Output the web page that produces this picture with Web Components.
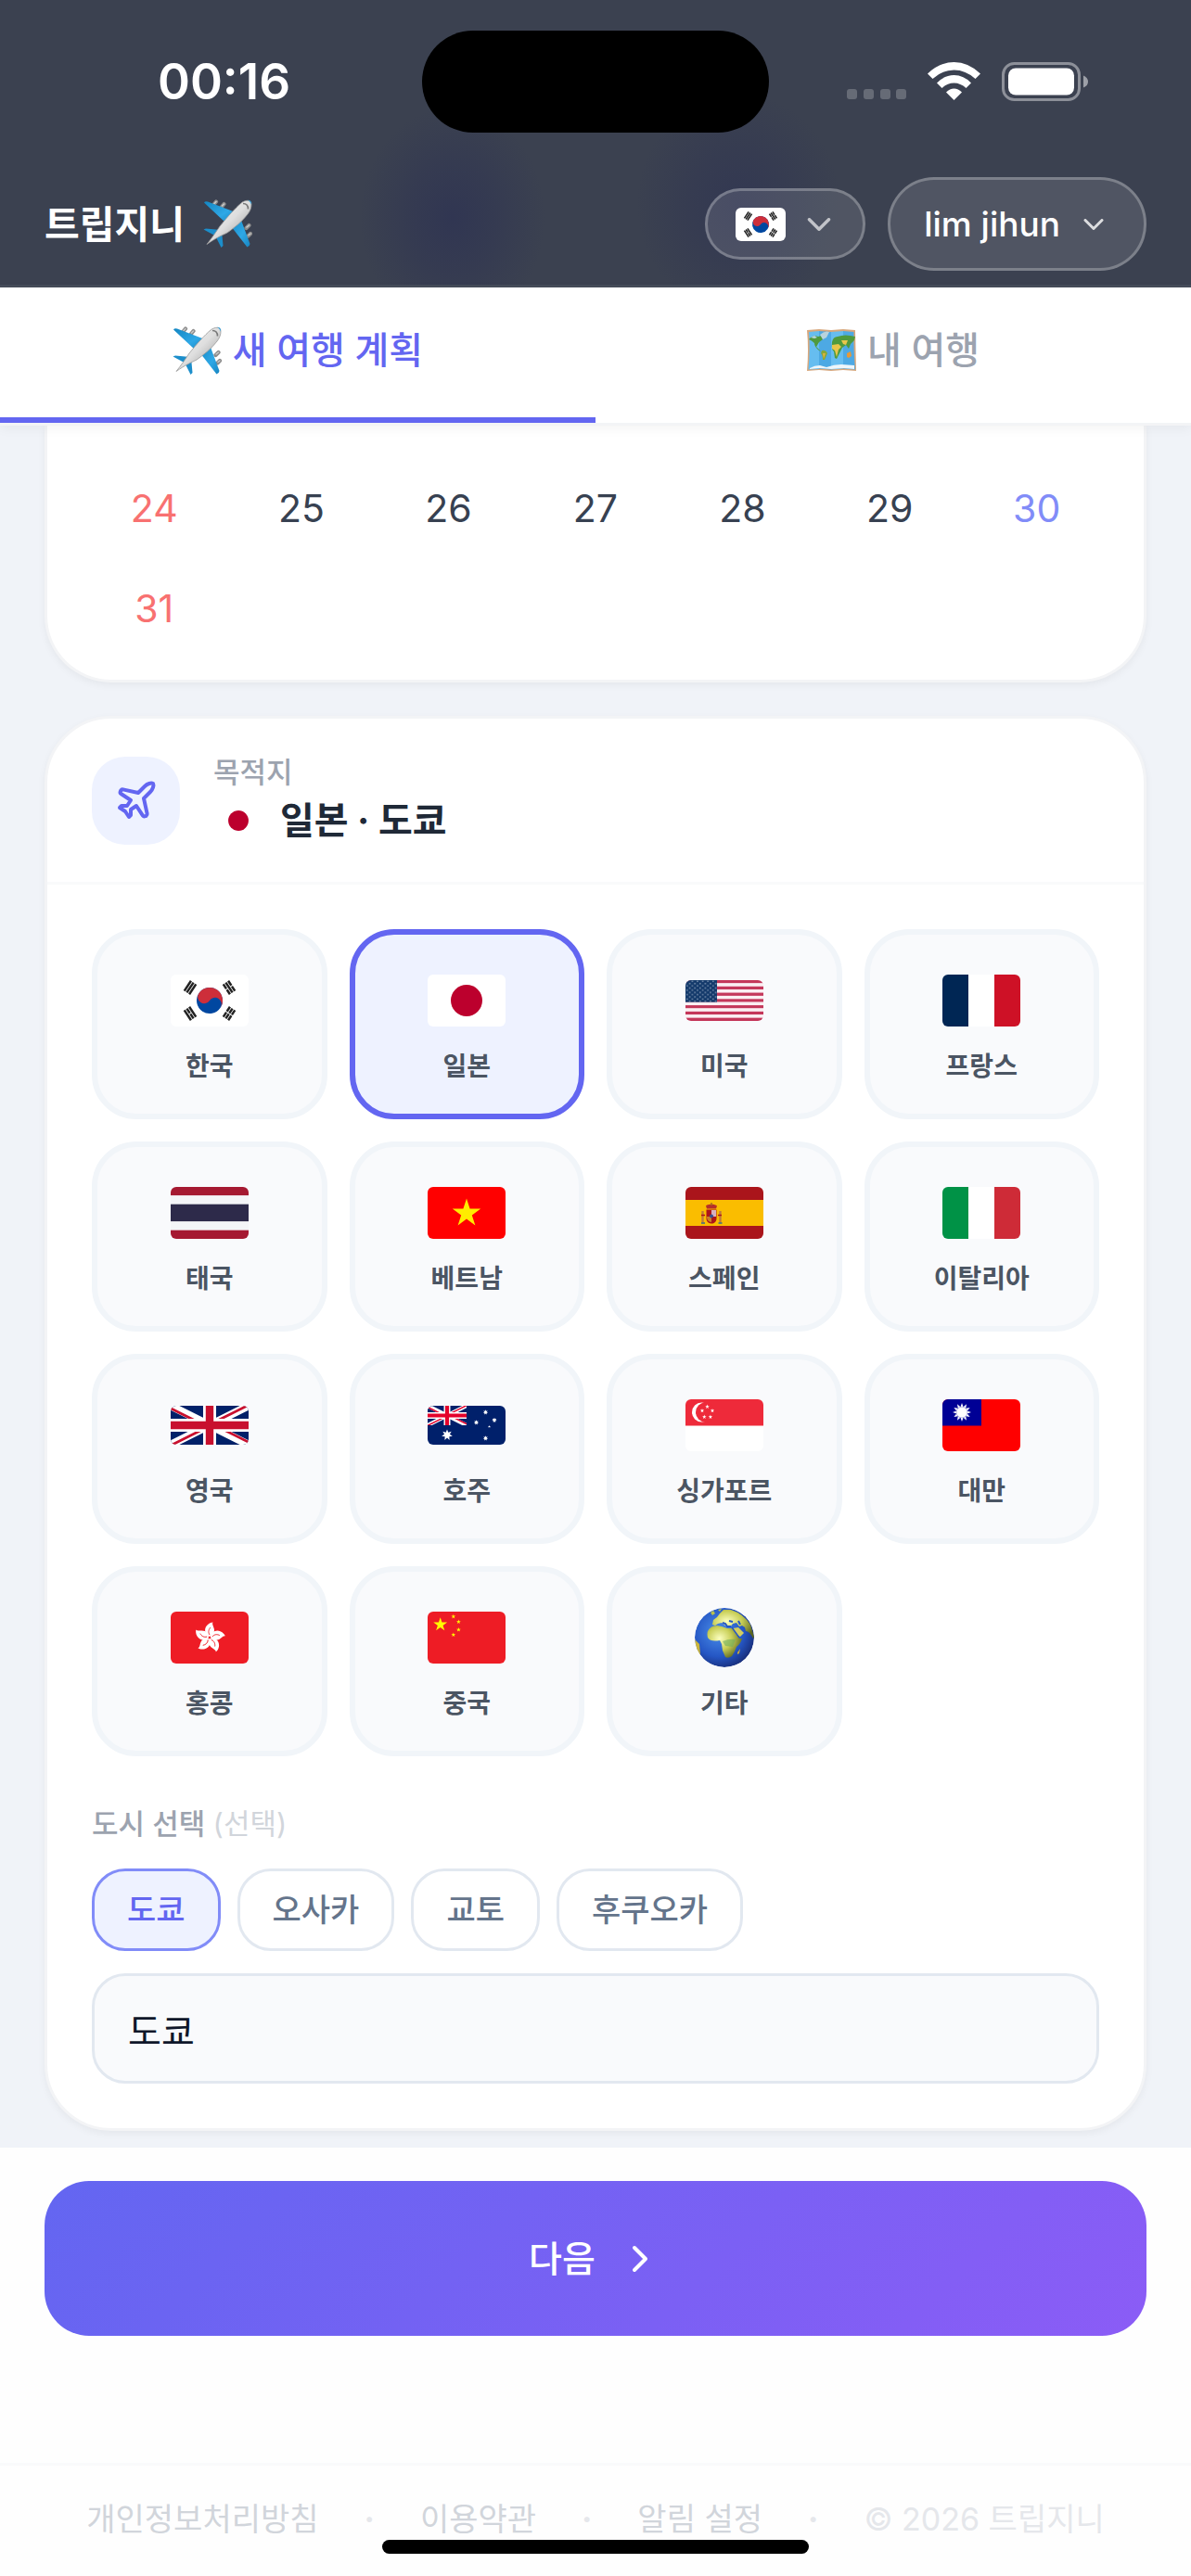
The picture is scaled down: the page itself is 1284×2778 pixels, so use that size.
<!DOCTYPE html>
<html lang="ko">
<head>
<meta charset="utf-8">
<meta name="viewport" content="width=device-width, initial-scale=1">
<title>트립지니</title>
<style>
    body {
        margin: 0;
        background-color: #f0f3f8;
        color: #1f2937;
        font-family: Inter, "Noto Sans CJK KR", sans-serif;
    }
</style>
</head>
<body>
<trip-app></trip-app>

<script>
const star = (cx, cy, r, fill, points = 5, inner = 0.382) => {
    const list = [];
    for (let i = 0; i < points * 2; i++) {
        const a = Math.PI * i / points - Math.PI / 2;
        const d = i % 2 ? r * inner : r;
        list.push(`${(cx + d * Math.cos(a)).toFixed(2)},${(cy + d * Math.sin(a)).toFixed(2)}`);
    }
    return `<polygon points="${list.join(" ")}" fill="${fill}"/>`;
};

const stripes = (colors, w, h) => colors.map((c, i) =>
    `<rect y="${h / colors.length * i}" width="${w}" height="${h / colors.length}" fill="${c}"/>`).join("");

const bands = (colors) => colors.map((c, i) =>
    `<rect x="${28 * i}" width="28" height="56" fill="${c}"/>`).join("");

// three bars, 1 = solid, 0 = broken
const trigram = (x, y, angle, bars) => `<g transform="translate(${x} ${y}) rotate(${angle})" stroke="#222" stroke-width="2.5">${
    bars.map((solid, i) => {
        const bx = (i - 1) * 3.2;
        return solid ? `<path d="M${bx} -6.5V6.5"/>` : `<path d="M${bx} -6.5V-.5M${bx} .5V6.5"/>`;
    }).join("")}</g>`;

const unionJack = (blue, red) => `
    <rect width="84" height="42" fill="${blue}"/>
    <path d="M0 0 84 42M84 0 0 42" stroke="#fff" stroke-width="8.4"/>
    <path d="M-2 1.8 40 22.8M44 19.2 86 -1.8M44 19.2 86 40.2M40 22.8 -2 43.8" stroke="${red}" stroke-width="2.8"/>
    <path d="M42 0V42M0 21H84" stroke="#fff" stroke-width="14"/>
    <path d="M42 0V42M0 21H84" stroke="${red}" stroke-width="8.4"/>`;

const petal = (angle) => `<g transform="translate(42 28) rotate(${angle})">
    <path d="M0-1C-5-3-6.5-9-3-13-1-15.5 2-16.5 3.5-16.5 2-14 5.5-11 5-7 4.5-4 2-2 0-1Z" fill="#fff"/>
    <path d="M0-3C-2-6-1-9 1-11" stroke="#ee1c25" stroke-width=".9" fill="none"/></g>`;

const FLAGS = {
    kr: [56, `<rect width="84" height="56" fill="#fff"/>
        <g transform="translate(42 28) rotate(33.7)">
            <circle r="14" fill="#0047a0"/>
            <path d="M-14 0A14 14 0 0 1 14 0A7 7 0 0 0 0 0A7 7 0 0 1-14 0Z" fill="#cd2e3a"/>
        </g>
        ${trigram(21, 14, 33.7, [1, 1, 1])}${trigram(63, 14, -33.7, [0, 1, 0])}
        ${trigram(21, 42, -33.7, [1, 0, 1])}${trigram(63, 42, 33.7, [0, 0, 0])}`],
    jp: [56, `<rect width="84" height="56" fill="#fff"/><circle cx="42" cy="28" r="17" fill="#bc002d"/>`],
    us: [44, stripes(Array.from({ length: 13 }, (_, i) => i % 2 ? "#fbeff2" : "#c4375a"), 84, 44) + `
        <pattern id="s" width="5.6" height="4.8" patternUnits="userSpaceOnUse">
            <circle cx="1.8" cy="1.3" r=".8" fill="#8fa3bd"/><circle cx="4.6" cy="3.7" r=".8" fill="#8fa3bd"/>
        </pattern>
        <rect width="34" height="23.7" fill="#143a6b"/><rect width="34" height="23.7" fill="url(#s)"/>`],
    fr: [56, bands(["#002654", "#fff", "#ce1126"])],
    th: [56, stripes(["#a51931", "#f4f5f8", "#2d2a4a", "#2d2a4a", "#f4f5f8", "#a51931"], 84, 56)],
    vn: [56, `<rect width="84" height="56" fill="#f00"/>${star(42, 28.5, 16, "#ffec00")}`],
    es: [56, `<rect width="84" height="56" fill="#aa151b"/><rect y="14" width="84" height="28" fill="#fabd00"/>
        <path d="M18.5 26v12.5M37.5 26v12.5" stroke="#c07b3a" stroke-width="2.4"/>
        <path d="M17 39h4M35.5 39h4" stroke="#3a6a8c" stroke-width="1.6"/>
        <path d="M17 30.5h4M35 30.5h4" stroke="#ad1519" stroke-width="1.6"/>
        <path d="M22.5 24.5h11V34c0 3.5-2.5 5.5-5.5 5.5S22.5 37.5 22.5 34Z" fill="#ad1519"/>
        <path d="M28 25h5v7h-5Z" fill="#d8b0c0"/><path d="M23 32h5v6c-3-.5-5-2-5-6Z" fill="#c8802a"/>
        <circle cx="28" cy="31.5" r="2" fill="#39508f"/>
        <path d="M23 23.5l-1-3c2-2.5 10-2.5 12 0l-1 3Z" fill="#b5302a"/><path d="M28 17v3" stroke="#a06a20" stroke-width="1.5"/>`],
    it: [56, bands(["#009246", "#fff", "#ce2b37"])],
    gb: [42, unionJack("#012169", "#c8102e")],
    au: [42, `<rect width="84" height="42" fill="#00206b"/>
        <clipPath id="u"><rect width="84" height="42"/></clipPath>
        <g transform="scale(.5)" clip-path="url(#u)">${unionJack("#00206b", "#e4002b")}</g>
        ${star(21, 31.5, 6, "#fff", 7, 0.5)}${star(62.5, 7, 2.8, "#fff", 7, 0.5)}${star(52.5, 18, 2.8, "#fff", 7, 0.5)}
        ${star(72, 15.5, 2.8, "#fff", 7, 0.5)}${star(66.5, 22.5, 1.6, "#fff")}${star(62.5, 35, 2.8, "#fff", 7, 0.5)}`],
    sg: [56, `<rect width="84" height="56" fill="#fff"/><rect width="84" height="28.5" fill="#ee2a3a"/>
        <circle cx="17.5" cy="14" r="10.5" fill="#fff"/><circle cx="21.5" cy="14" r="10.5" fill="#ee2a3a"/>
        ${star(23.5, 8, 2.4, "#fff")}${star(18, 12.3, 2.4, "#fff")}${star(29, 12.3, 2.4, "#fff")}${star(20.3, 19, 2.4, "#fff")}${star(26.9, 19, 2.4, "#fff")}`],
    tw: [56, `<rect width="84" height="56" fill="#f00"/><rect width="42" height="28.5" fill="#000095"/>
        ${star(21, 14, 10, "#fff", 12, 0.6)}<circle cx="21" cy="14" r="6.3" fill="#000095" opacity=".35"/><circle cx="21" cy="14" r="5.6" fill="#fff"/>`],
    hk: [56, `<rect width="84" height="56" fill="#ee1c25"/>${[0, 72, 144, 216, 288].map(petal).join("")}`],
    cn: [56, `<rect width="84" height="56" fill="#ee1c25"/>${star(13.7, 14, 7.8, "#ff0")}
        ${star(27.8, 5.3, 2.6, "#ff0")}${star(33.4, 11, 2.6, "#ff0")}${star(33.4, 19.5, 2.6, "#ff0")}${star(27.8, 25, 2.6, "#ff0")}`],
};

const ICONS = {
    plane: ["0 0 24 24", `<path d="M17.8 19.2 16 11l3.5-3.5C21 6 21.5 4 21 3c-1-.5-3 0-4.5 1.5L13 8 4.8 6.2c-.5-.1-.9.1-1.1.5l-.3.5c-.2.5-.1 1 .3 1.3L9 12l-2 3H4l-1 1 3 2 2 3 1-1v-3l3-2 3.5 5.3c.3.4.8.5 1.3.3l.5-.2c.4-.3.6-.7.5-1.2z"/>`],
    down: ["0 0 24 24", `<path d="m6 9 6 6 6-6"/>`],
    right: ["0 0 24 24", `<path d="m9 18 6-6-6-6"/>`],
};

const EMOJI = {
    airplane: `<defs>
            <linearGradient id="b" x1="0" y1="0" x2="1" y2="1"><stop offset="0" stop-color="#f8f8f8"/><stop offset=".5" stop-color="#dedede"/><stop offset="1" stop-color="#8d8d8d"/></linearGradient>
            <linearGradient id="w" x1="0" y1="0" x2="1" y2="1"><stop offset="0" stop-color="#1386c2"/><stop offset=".6" stop-color="#2fa8e6"/><stop offset="1" stop-color="#1684c0"/></linearGradient>
        </defs>
        <g stroke="#8b8b8b" stroke-width="4.2" stroke-linecap="round">
            <path d="M11.5 5.5 14 2.5M20 8 22.5 5M46.5 31 49.5 28M48.5 39.5 51 37"/>
        </g>
        <g stroke="#c9c9c9" stroke-width="1.5" stroke-linecap="round">
            <path d="M12 4.5 14 2.5M20.5 7 22.5 5M47 30 49.5 28M49 38.5 51 37"/>
        </g>
        <path d="M1 3.5Q2 1.8 5 2.5L35 14 24 25Z" fill="url(#w)"/>
        <path d="M50.5 48Q50 51 47.5 51.5L30 29 39 17Z" fill="url(#w)"/>
        <path d="M.5 32.5 3 31.5 19 33 13.5 39.5Z" fill="#1c8ecb"/>
        <path d="M19.5 52 21.5 50 20 33.5 13 39Z" fill="#1c8ecb"/>
        <path d="M4 48.5C10 41 14 35 18 29 26 19 35 9 41 4c4-3.500 11-4 11 1 0 4-1 7-4 11-6 8-15 15-22 20-6 3-13 6-22 12.500Z" fill="url(#b)" stroke="#9a9a9a" stroke-width=".8"/>
        <path d="M43 4.5c4 0 5.5 2 5.5 6" stroke="#777" stroke-width="1.6" fill="none"/>
        <path d="M48 .8c3 0 4.5 1.7 4 5-1-2.5-2-4-4-5Z" fill="#2e9fdc"/>`,
    map: `<path d="M0 4 13 3 26 4 39 3 52 4 53 48 39 47 26 48 13 47 0 48Q2 25 0 4Z" fill="#d8a77c"/>
        <path d="M2 6 13 5V46L1.5 46.5Q3.5 25 2 6Z" fill="#66bdf0"/>
        <path d="M13 5 26 6V46.5L13 45.5Z" fill="#4da9e4"/>
        <path d="M26 6 39 5V45.5L26 46.5Z" fill="#66bdf0"/>
        <path d="M39 5 50.5 6Q50 25 52 46.5L39 45.5Z" fill="#4da9e4"/>
        <path d="M4 12q4-3 8-1l4-1 1 4-4 3-3 5q4 4 5 5l-2-1q-5-4-5-8-3-3-6-4Z" fill="#4f9a3e"/>
        <path d="M14 9q5-5 10-3l-3 6-4 2ZM4 12l4-2 3 2-3 1Z" fill="#b8d3dd"/>
        <path d="M16 26q4-1 6 3l-3 7-2 0q0-5-2-7Z" fill="#86a83a"/>
        <path d="M17 29l3 0-2 6Z" fill="#e3b23b"/>
        <path d="M27 17q1-6 6-6 8-3 19 0l-1 4-4 4-2 5-3-4-4 3-3 6-3 6-2-1-1-7q-3-2-2-10Z" fill="#4f9a3e"/>
        <path d="M27 20l7-1 3 3-3 3-2 8-2-7-3-2ZM37 15l7 0-2 5-3-1Z" fill="#e9c64a"/>
        <path d="M43 29l4-2 1 5-3 2-2-1Z" fill="#e6993a"/>
        <path d="M3 45q5-3 11-3l7 2q8-3 16-3l14 1v4l-12-1-13 1-13-1-10 1Z" fill="#eef6fb"/>`,
    globe: `<defs>
            <radialGradient id="g" cx=".4" cy=".4" r=".65"><stop offset="0" stop-color="#4a8fea"/><stop offset=".65" stop-color="#2556c4"/><stop offset="1" stop-color="#182c78"/></radialGradient>
            <radialGradient id="l" cx=".35" cy=".4" r=".7"><stop offset="0" stop-color="#fbffc0"/><stop offset=".5" stop-color="#c9cf57"/><stop offset="1" stop-color="#5a6420"/></radialGradient>
            <clipPath id="c"><circle cx="32" cy="32" r="32"/></clipPath>
        </defs>
        <g clip-path="url(#c)">
            <circle cx="32" cy="32" r="32" fill="url(#g)"/>
            <path d="M19 18l1-5 4-3 3-4 4-4 8 0q13 4 21 16l4 13-1 2q-4-8-8-8l-1-4-3-2-3 1-3-4-4 1-3 4-4-1-5-4-4 1-3 2Z" fill="url(#l)"/>
            <path d="M17 5l3-2 2 3-3 2ZM25 2l4-1-2 3Z" fill="#b9c24e"/>
            <path d="M14 25q3-6 10-6l5 1 6 2 6 0 3 5 4 6 3 0q-1 5-6 9l-2 5-3 5q-4 3-7 1l-3-7-1-7-2-4q-10 2-13-3-1-4 0-7Z" fill="url(#l)"/>
            <path d="M30 36q7-3 14-2l-3 8-8-1Z" fill="#6fae5b" opacity=".6"/>
            <path d="M41 22l6-1 6 6-4 4-4-2Z" fill="#d3cd60"/>
            <path d="M40 21l8 11" stroke="#2556c4" stroke-width="1.4"/>
            <path d="M30 16l3 1 2 3 4 0M37 14l4 1M47 14l2 4" stroke="#2556c4" stroke-width="2" fill="none"/>
            <path d="M46 48l3-4-1 5-2 1Z" fill="#c7a93c"/>
            <path d="M0 34l5 5 1 11-4 0Z" fill="#c9b43c"/>
        </g>`,
};

const COUNTRIES = [
    ["kr", "한국"], ["jp", "일본"], ["us", "미국"], ["fr", "프랑스"],
    ["th", "태국"], ["vn", "베트남"], ["es", "스페인"], ["it", "이탈리아"],
    ["gb", "영국"], ["au", "호주"], ["sg", "싱가포르"], ["tw", "대만"],
    ["hk", "홍콩"], ["cn", "중국"], ["etc", "기타"],
];

class FlagIcon extends HTMLElement {
    connectedCallback() {
        const [height, body] = FLAGS[this.getAttribute("code")];
        this.attachShadow({ mode: "open" }).innerHTML = `<style>
            :host { display: block; width: 84px; }
            svg { display: block; width: 100%; border-radius: 6px; }
        </style>
        <svg viewBox="0 0 84 ${height}" aria-hidden="true">${body}</svg>`;
    }
}

class LineIcon extends HTMLElement {
    connectedCallback() {
        const [box, body] = ICONS[this.getAttribute("name")];
        this.attachShadow({ mode: "open" }).innerHTML = `<style>
            :host { display: block; width: 48px; flex: none; }
            svg { display: block; width: 100%; }
        </style>
        <svg viewBox="${box}" fill="none" stroke="currentColor" stroke-width="2" stroke-linecap="round" stroke-linejoin="round" aria-hidden="true">${body}</svg>`;
    }
}

class EmojiIcon extends HTMLElement {
    connectedCallback() {
        const name = this.getAttribute("name");
        const size = name === "globe" ? 64 : 53;
        this.attachShadow({ mode: "open" }).innerHTML = `<style>
            :host { display: block; width: ${size}px; flex: none; }
            svg { display: block; width: 100%; }
        </style>
        <svg viewBox="0 0 ${size} ${size}" aria-hidden="true">${EMOJI[name]}</svg>`;
    }
}

class StatusBar extends HTMLElement {
    connectedCallback() {
        this.attachShadow({ mode: "open" }).innerHTML = `<style>
            :host {
                display: grid;
                grid-template-columns: 1fr 374px 1fr;
                align-items: center;
                padding-top: 33px;
                color: #fff;
            }
            time {
                padding-left: 28px;
                text-align: center;
                font-size: 53px;
                font-weight: 600;
                line-height: 64px;
            }
            .island { height: 110px; border-radius: 55px; background-color: #000; }
            .icons {
                display: flex;
                justify-content: center;
                padding-right: 28px;
            }
            svg { display: block; width: 260px; height: 42px; }
        </style>
        <time>00:16</time>
        <div class="island"></div>
        <div class="icons">
            <svg viewBox="0 0 260 42" fill="#fff" aria-hidden="true">
                <g opacity=".22">
                    <rect y="29" width="11" height="11" rx="3"/><rect x="18" y="29" width="11" height="11" rx="3"/>
                    <rect x="36" y="29" width="11" height="11" rx="3"/><rect x="53" y="29" width="11" height="11" rx="3"/>
                </g>
                <path d="M87 12.5Q100 0 115.5 0T144 12.5L138.5 18Q128 8.5 115.5 8.5T92.5 18Z"/>
                <path d="M97 22.5Q105 14 115.5 14T134 22.5L128.5 28Q122.5 22.5 115.5 22.5T102.5 28Z"/>
                <path d="M107 32.5Q111 28.5 115.5 28.5T124 32.5L115.5 41Z"/>
                <rect x="168.5" y="1.5" width="82" height="39" rx="12" fill="none" stroke="#fff" stroke-width="3" opacity=".42"/>
                <rect x="174" y="6.5" width="71" height="29" rx="8"/>
                <path d="M255 14.5q5 2 5 6.5t-5 6.5Z" opacity=".5"/>
            </svg>
        </div>`;
    }
}

class AppHeader extends HTMLElement {
    connectedCallback() {
        this.attachShadow({ mode: "open" }).innerHTML = `<style>
            :host {
                display: block;
                border-bottom: 3px solid #454c5a;
                background:
                    radial-gradient(ellipse 100px 120px at 38% 235px, #2c3153b0, #2c315360 50%, #2c315300),
                    radial-gradient(ellipse 110px 120px at 62% 220px, #2c315390, #2c315350 50%, #2c315300),
                    #3b4150;
                color: #fff;
            }
            .row {
                display: flex;
                align-items: center;
                gap: 24px;
                padding: 48px 48px 15px;
            }
            .brand {
                display: flex;
                align-items: center;
                gap: 20px;
                margin-right: auto;
                color: inherit;
                text-decoration: none;
                font-size: 41px;
                font-weight: 700;
                line-height: 48px;
            }
            button {
                display: flex;
                align-items: center;
                box-sizing: border-box;
                border: 3px solid #ffffff40;
                background-color: #ffffff1c;
                color: inherit;
                font: inherit;
            }
            .lang {
                gap: 15px;
                height: 77px;
                padding: 0 26px 0 30px;
                border-radius: 38px;
            }
            .user {
                gap: 18px;
                height: 101px;
                padding: 0 36px;
                border-radius: 50px;
                font-size: 37px;
                font-weight: 500;
            }
            flag-icon { width: 54px; }
            line-icon { opacity: .65; }
            .lang line-icon { width: 42px; }
            .user line-icon { width: 36px; opacity: .8; }
        </style>
        <status-bar></status-bar>
        <div class="row">
            <a class="brand" href="#">트립지니 <emoji-icon name="airplane"></emoji-icon></a>
            <button class="lang" type="button" aria-label="한국어" aria-haspopup="menu">
                <flag-icon code="kr"></flag-icon><line-icon name="down"></line-icon>
            </button>
            <button class="user" type="button" aria-haspopup="menu">lim jihun<line-icon name="down"></line-icon></button>
        </div>`;
    }
}

class TripTab extends HTMLElement {
    connectedCallback() {
        const selected = this.hasAttribute("selected");
        this.attachShadow({ mode: "open" }).innerHTML = `<style>
            :host { display: block; flex: 1; }
            button {
                display: flex;
                align-items: center;
                justify-content: center;
                gap: 12px;
                box-sizing: border-box;
                width: 100%;
                height: 146px;
                padding: 0 0 4px;
                border: 0;
                border-bottom: 6px solid transparent;
                background: none;
                color: #9ca3af;
                font: 500 40px/48px Inter, "Noto Sans CJK KR", sans-serif;
            }
            :host([selected]) button {
                border-color: #6366f1;
                color: #6366f1;
            }
        </style>
        <button type="button" role="tab" aria-selected="${selected}">
            <emoji-icon name="${this.getAttribute("icon")}"></emoji-icon><slot></slot>
        </button>`;
    }
}

class TripTabs extends HTMLElement {
    connectedCallback() {
        this.attachShadow({ mode: "open" }).innerHTML = `<style>
            :host {
                display: flex;
                position: relative;
                border-bottom: 3px solid #f3f4f6;
                background-color: #fff;
                box-shadow: 0 3px 12px #0000000d;
            }
        </style>
        <slot></slot>`;
        this.setAttribute("role", "tablist");
    }
}

class TripCard extends HTMLElement {
    connectedCallback() {
        this.attachShadow({ mode: "open" }).innerHTML = `<style>
            :host {
                display: block;
                margin: 0 48px;
                border: 3px solid #f3f4f6;
                border-radius: 72px;
                background-color: #fff;
                box-shadow: 0 3px 9px #0000000d;
            }
            :host([scrolled]) {
                border-top: 0;
                border-radius: 0 0 72px 72px;
            }
        </style>
        <slot></slot>`;
    }
}

class CalendarWeeks extends HTMLElement {
    connectedCallback() {
        const weeks = [[24, 25, 26, 27, 28, 29, 30], [31, "", "", "", "", "", ""]];
        this.attachShadow({ mode: "open" }).innerHTML = `<style>
            :host { display: block; padding: 35px 36px 23px; }
            table { width: 100%; border-collapse: collapse; table-layout: fixed; }
            td {
                height: 108px;
                padding: 0;
                color: #374151;
                font-size: 41px;
                text-align: center;
            }
            td:first-child { color: #f87171; }
            td:last-child { color: #818cf8; }
        </style>
        <table aria-label="날짜">${weeks.map((week) =>
            `<tr>${week.map((day) => `<td>${day}</td>`).join("")}</tr>`).join("")}
        </table>`;
    }
}

class DestinationHead extends HTMLElement {
    connectedCallback() {
        this.attachShadow({ mode: "open" }).innerHTML = `<style>
            :host {
                display: flex;
                align-items: center;
                gap: 36px;
                padding: 34px 48px;
                border-bottom: 3px solid #f9fafb;
            }
            .badge {
                display: grid;
                place-items: center;
                width: 95px;
                height: 95px;
                border-radius: 36px;
                background-color: #eef2ff;
                color: #6366f1;
            }
            .text { padding-bottom: 4px; }
            p {
                margin: 0;
                color: #9ca3af;
                font-size: 31px;
                font-weight: 500;
                line-height: 48px;
            }
            h2 {
                display: flex;
                align-items: center;
                gap: 18px;
                margin: 0;
                font-size: 40px;
                font-weight: 700;
                line-height: 56px;
            }
            flag-icon { width: 54px; }
        </style>
        <div class="badge"><line-icon name="plane"></line-icon></div>
        <div class="text">
            <p>목적지</p>
            <h2><flag-icon code="jp"></flag-icon><slot></slot></h2>
        </div>`;
    }
}

class CountryTile extends HTMLElement {
    connectedCallback() {
        const code = this.getAttribute("code");
        const picture = FLAGS[code] ? `<flag-icon code="${code}"></flag-icon>` : `<emoji-icon name="globe"></emoji-icon>`;
        this.attachShadow({ mode: "open" }).innerHTML = `<style>
            :host { display: block; }
            button {
                display: flex;
                flex-direction: column;
                align-items: center;
                gap: 18px;
                box-sizing: border-box;
                width: 100%;
                height: 205px;
                padding: 36px 0 0;
                border: 6px solid #f1f5f9;
                border-radius: 48px;
                background-color: #f9fafc;
                color: #4b5563;
                font: 600 28px/36px Inter, "Noto Sans CJK KR", sans-serif;
            }
            :host([selected]) button {
                border-color: #6366f1;
                background-color: #eef2ff;
            }
            .picture { display: grid; place-items: center; height: 70px; }
        </style>
        <button type="button" aria-pressed="${this.hasAttribute("selected")}">
            <span class="picture">${picture}</span><slot></slot>
        </button>`;
    }
}

class CountryGrid extends HTMLElement {
    connectedCallback() {
        this.attachShadow({ mode: "open" }).innerHTML = `<style>
            :host {
                display: grid;
                grid-template-columns: repeat(4, 1fr);
                gap: 24px;
            }
        </style>
        ${COUNTRIES.map(([code, name]) =>
            `<country-tile code="${code}"${code === "jp" ? " selected" : ""}>${name}</country-tile>`).join("")}`;
    }
}

class CityChip extends HTMLElement {
    connectedCallback() {
        this.attachShadow({ mode: "open" }).innerHTML = `<style>
            :host { display: block; }
            button {
                box-sizing: border-box;
                height: 89px;
                padding: 0 35px;
                border: 3px solid #e2e8f0;
                border-radius: 36px;
                background-color: #fff;
                color: #64748b;
                font: 500 34px/48px Inter, "Noto Sans CJK KR", sans-serif;
            }
            :host([selected]) button {
                border-color: #818cf8;
                background-color: #eef2ff;
                color: #6366f1;
            }
        </style>
        <button type="button" aria-pressed="${this.hasAttribute("selected")}"><slot></slot></button>`;
    }
}

class CityPicker extends HTMLElement {
    connectedCallback() {
        this.attachShadow({ mode: "open" }).innerHTML = `<style>
            :host { display: block; padding-top: 49px; }
            label {
                display: block;
                color: #9ca3af;
                font-size: 31px;
                font-weight: 500;
                line-height: 48px;
            }
            label span { color: #d1d5db; font-weight: 400; }
            .chips { display: flex; flex-wrap: wrap; gap: 18px; padding: 24px 0; }
            input {
                display: block;
                box-sizing: border-box;
                width: 100%;
                height: 119px;
                padding: 0 36px;
                border: 3px solid #e2e8f0;
                border-radius: 36px;
                background-color: #f9fafc;
                color: #0f172a;
                font: 400 39px/48px Inter, "Noto Sans CJK KR", sans-serif;
            }
        </style>
        <label for="city">도시 선택 <span>(선택)</span></label>
        <div class="chips">
            <city-chip selected>도쿄</city-chip>
            <city-chip>오사카</city-chip>
            <city-chip>교토</city-chip>
            <city-chip>후쿠오카</city-chip>
        </div>
        <input id="city" type="text" value="도쿄">`;
    }
}

class ActionBar extends HTMLElement {
    connectedCallback() {
        this.attachShadow({ mode: "open" }).innerHTML = `<style>
            :host {
                display: block;
                margin-top: 18px;
                padding: 36px 48px 137px;
                background-color: #fefefe;
            }
            button {
                display: flex;
                align-items: center;
                justify-content: center;
                gap: 24px;
                width: 100%;
                height: 167px;
                border: 0;
                border-radius: 48px;
                background: linear-gradient(135deg, #6366f1, #8b5cf6);
                color: #fff;
                font: 500 39px/48px Inter, "Noto Sans CJK KR", sans-serif;
            }
        </style>
        <button type="button"><slot></slot><line-icon name="right"></line-icon></button>`;
    }
}

class SiteFooter extends HTMLElement {
    connectedCallback() {
        this.attachShadow({ mode: "open" }).innerHTML = `<style>
            :host {
                display: block;
                position: relative;
                flex: 1;
                border-top: 3px solid #f9fafb;
                background-color: #fefefe;
                color: #e5e7eb;
                font-size: 34px;
                line-height: 48px;
            }
            nav {
                display: flex;
                justify-content: center;
                gap: 49px;
                padding: 34px 0 37px;
            }
            a { color: #d1d5db; text-decoration: none; }
            .dot { font-weight: 700; }
            .home {
                position: absolute;
                bottom: 24px;
                left: 50%;
                width: 460px;
                height: 15px;
                margin-left: -230px;
                border-radius: 8px;
                background-color: #000;
            }
        </style>
        <nav>
            <a href="#privacy">개인정보처리방침</a><span class="dot">·</span>
            <a href="#terms">이용약관</a><span class="dot">·</span>
            <a href="#alerts">알림 설정</a><span class="dot">·</span>
            <span>© 2026 트립지니</span>
        </nav>
        <div class="home"></div>`;
    }
}

class TripApp extends HTMLElement {
    connectedCallback() {
        this.attachShadow({ mode: "open" }).innerHTML = `<style>
            :host { display: flex; flex-direction: column; min-height: 100vh; }
            main { display: flex; flex-direction: column; gap: 36px; }
            .body { padding: 48px; }
        </style>
        <app-header></app-header>
        <trip-tabs>
            <trip-tab icon="airplane" selected>새 여행 계획</trip-tab>
            <trip-tab icon="map">내 여행</trip-tab>
        </trip-tabs>
        <main>
            <trip-card scrolled><calendar-weeks></calendar-weeks></trip-card>
            <trip-card>
                <destination-head>일본 · 도쿄</destination-head>
                <div class="body">
                    <country-grid></country-grid>
                    <city-picker></city-picker>
                </div>
            </trip-card>
        </main>
        <action-bar>다음</action-bar>
        <site-footer></site-footer>`;
    }
}

customElements.define("flag-icon", FlagIcon);
customElements.define("line-icon", LineIcon);
customElements.define("emoji-icon", EmojiIcon);
customElements.define("status-bar", StatusBar);
customElements.define("app-header", AppHeader);
customElements.define("trip-tab", TripTab);
customElements.define("trip-tabs", TripTabs);
customElements.define("trip-card", TripCard);
customElements.define("calendar-weeks", CalendarWeeks);
customElements.define("destination-head", DestinationHead);
customElements.define("country-tile", CountryTile);
customElements.define("country-grid", CountryGrid);
customElements.define("city-chip", CityChip);
customElements.define("city-picker", CityPicker);
customElements.define("action-bar", ActionBar);
customElements.define("site-footer", SiteFooter);
customElements.define("trip-app", TripApp);
</script>
</body>
</html>
